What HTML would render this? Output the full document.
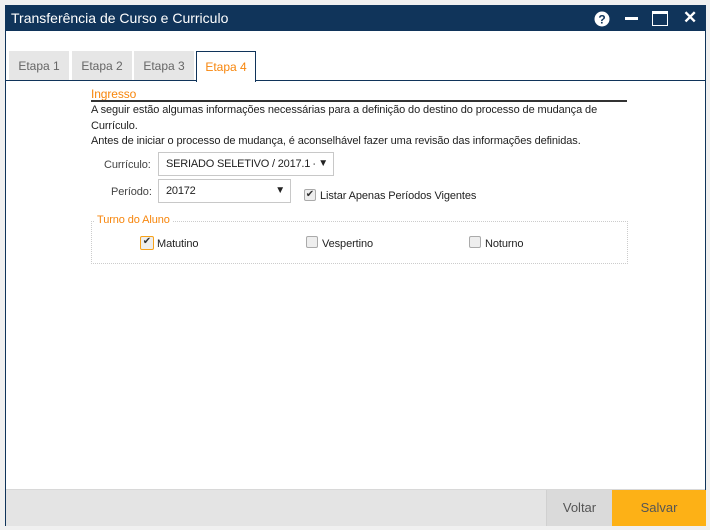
<!DOCTYPE html>
<html><head><meta charset="utf-8"><style>
*{margin:0;padding:0;box-sizing:border-box}
body{width:710px;height:530px;background:#f0f0f0;font-family:"Liberation Sans",sans-serif;position:relative;overflow:hidden;color:#222}
.win{position:absolute;left:5px;top:5px;width:701px;height:521px;background:#fff;border:1px solid #10345a}
.title{position:absolute;left:0;top:0;width:100%;height:25px;background:#10345a;color:#fff;font-size:14px;line-height:24px;padding-left:5px}
.tab{position:absolute;top:45px;height:30px;background:#e6e6e6;color:#666;font-size:12px;text-align:center;line-height:30px}
.tab.on{background:#fff;color:#f7860d;border:1px solid #10345a;border-bottom:none;height:31px}
.tline{position:absolute;left:0;top:74px;width:100%;height:1px;background:#10345a}
.t{position:absolute;font-size:11px;white-space:nowrap;letter-spacing:-0.1px}
.sel{position:absolute;height:24px;border:1px solid #c8c8c8;background:#fff;font-size:11px;line-height:22px;padding-left:7px;overflow:hidden;white-space:nowrap;letter-spacing:-0.2px}
.sel b{position:absolute;right:5px;top:0;font-size:10px;background:#fff;padding-left:3px}
.cb{position:absolute;width:12px;height:12px;border:1px solid #aaa;border-radius:2px;background:#eee;font-size:10px;line-height:10px;text-align:center;color:#333}
.foot{position:absolute;left:0;top:483px;width:100%;height:37px;background:#e4e4e4;border-top:1px solid #d8d8d8}
</style></head><body>
<div class="win">
<div class="title">Transferência de Curso e Curriculo</div>
<svg style="position:absolute;left:588px;top:5px" width="16" height="16"><circle cx="8" cy="8" r="7.5" fill="#fff"/><text x="8" y="12.5" font-size="12" font-weight="bold" text-anchor="middle" fill="#10345a" font-family="Liberation Sans">?</text></svg>
<div style="position:absolute;left:619px;top:11px;width:13px;height:3px;background:#fff"></div>
<div style="position:absolute;left:646px;top:5px;width:16px;height:15px;border:1.5px solid #fff;border-top-width:3px"></div>
<div style="position:absolute;left:677px;top:2px;color:#fff;font-size:17px;font-weight:bold">✕</div>
<div class="tab" style="left:3px;width:60px">Etapa 1</div>
<div class="tab" style="left:66px;width:60px">Etapa 2</div>
<div class="tab" style="left:128px;width:60px">Etapa 3</div>
<div class="tline"></div>
<div class="tab on" style="left:190px;width:60px">Etapa 4</div>
<div class="t" style="left:85px;top:81px;color:#f7860d;font-size:12px">Ingresso</div>
<div style="position:absolute;left:85px;top:94px;width:536px;height:2px;background:#333"></div>
<div class="t" style="left:85px;top:98px">A seguir estão algumas informações necessárias para a definição do destino do processo de mudança de</div>
<div class="t" style="left:85px;top:114px">Currículo.</div>
<div class="t" style="left:85px;top:129px">Antes de iniciar o processo de mudança, é aconselhável fazer uma revisão das informações definidas.</div>
<div class="t" style="left:98px;top:153px;color:#444">Currículo:</div>
<div class="sel" style="left:152px;top:146px;width:176px">SERIADO SELETIVO / 2017.1 - M<b>▼</b></div>
<div class="t" style="left:105px;top:180px;color:#444">Período:</div>
<div class="sel" style="left:152px;top:173px;width:133px">20172<b>▼</b></div>
<div class="cb" style="left:298px;top:183px">✔</div>
<div class="t" style="left:314px;top:184px">Listar Apenas Períodos Vigentes</div>
<div style="position:absolute;left:85px;top:215px;width:537px;height:43px;border:1px dotted #ccc"></div>
<div class="t" style="left:89px;top:208px;color:#f7860d;background:#fff;padding:0 2px">Turno do Aluno</div>
<div class="cb" style="left:134px;top:230px;border:1px solid #f7a21a;width:14px;height:14px">✔</div>
<div class="t" style="left:151px;top:232px">Matutino</div>
<div class="cb" style="left:300px;top:230px"></div>
<div class="t" style="left:316px;top:232px">Vespertino</div>
<div class="cb" style="left:463px;top:230px"></div>
<div class="t" style="left:479px;top:232px">Noturno</div>
<div class="foot">
<div style="position:absolute;left:540px;top:0;width:66px;height:36px;background:#dadada;border-left:1px solid #d0d0d0;color:#555;font-size:13px;text-align:center;line-height:36px">Voltar</div>
<div style="position:absolute;left:606px;top:0;width:94px;height:36px;background:#fdb116;color:#555;font-size:13px;text-align:center;line-height:36px">Salvar</div>
</div>
</div>
</body></html>
